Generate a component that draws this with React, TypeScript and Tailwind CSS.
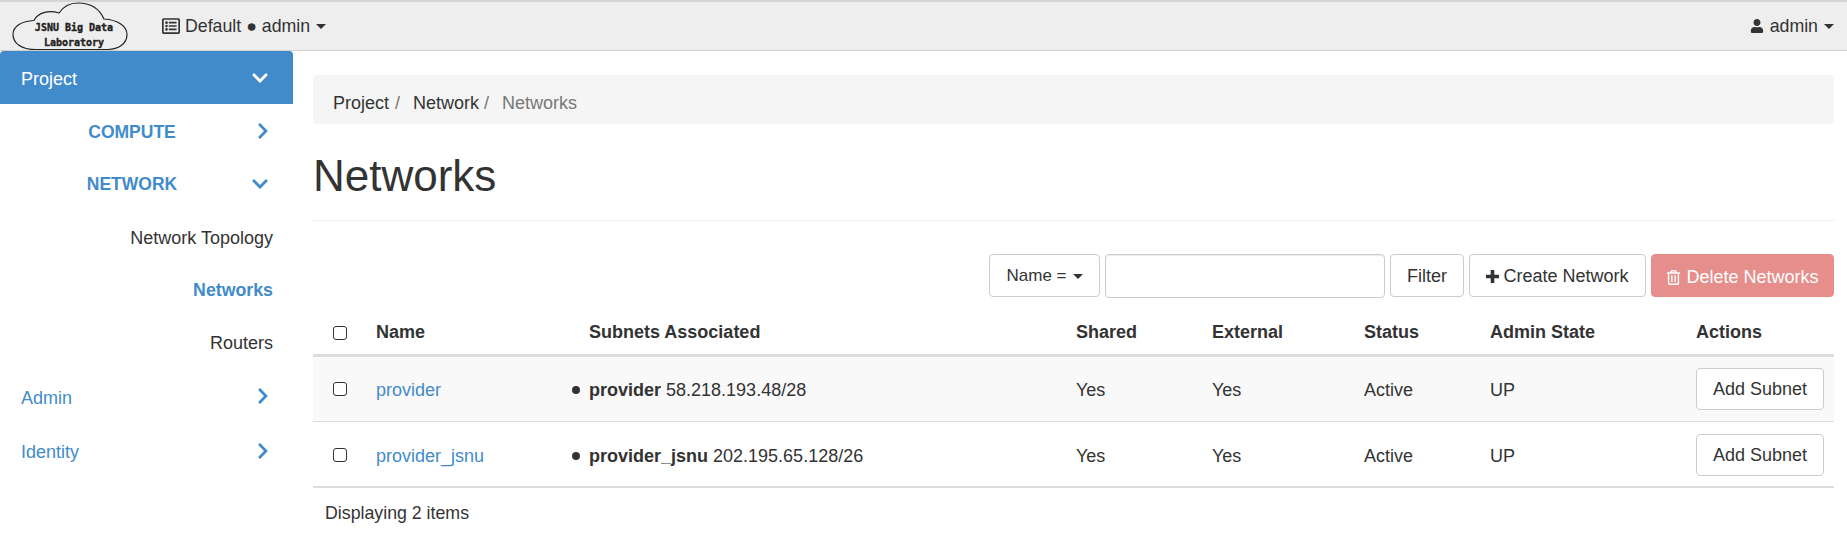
import { FaChevronDown, FaChevronRight, FaRegListAlt, FaRegTrashAlt, FaUser } from 'react-icons/fa';

function Caret() {
  return <span className="ml-[6px] inline-block h-0 w-0 border-x-[5px] border-t-[5px] border-x-transparent border-t-[#333]" />;
}

function PlusIcon() {
  return (
    <svg width="13" height="13" viewBox="0 0 13 13" className="mr-[4px]">
      <path d="M4.7 0h3.6v4.7H13v3.6H8.3V13H4.7V8.3H0V4.7h4.7z" fill="#333" />
    </svg>
  );
}

function Logo() {
  return (
    <svg width="118" height="50" viewBox="0 0 118 50" className="shrink-0">
      <path
        d="M24 48.5C9 48.5 1 42 1 33.5C1 25 10 20 22 19.5C26 11 38 9 47 12C51 6 58 2 66 2C80 2 88 9 92 18C106 19 115 25 115 33.5C115 43 106 48.5 96 48.5Z"
        fill="#eeeeee"
        stroke="#222"
        strokeWidth="1.2"
      />
      <text x="62" y="29.5" textAnchor="middle" fontFamily="'DejaVu Sans Mono', monospace" fontWeight="700" fontSize="10" fill="#222" stroke="#222" strokeWidth="0.35">JSNU Big Data</text>
      <text x="62" y="44.5" textAnchor="middle" fontFamily="'DejaVu Sans Mono', monospace" fontWeight="700" fontSize="10" fill="#222" stroke="#222" strokeWidth="0.35">Laboratory</text>
    </svg>
  );
}

function Navbar() {
  return (
    <header className="flex h-[51px] items-center border-t-2 border-b border-t-[#d4d4d4] border-b-[#d0d0d0] bg-[#eeeeee] pl-3 pr-[13px] text-[17.75px] text-[#333]">
      <Logo />
      <div className="ml-[32px] flex items-center">
        <FaRegListAlt className="mr-[5px] text-[18px]" />
        <span>Default ● admin</span>
        <Caret />
      </div>
      <div className="ml-auto flex items-center">
        <FaUser className="mr-[6px] text-[14px]" />
        <span>admin</span>
        <Caret />
      </div>
    </header>
  );
}

function Sidebar() {
  return (
    <aside className="w-[293px] shrink-0 text-[#428bca]">
      <div className="flex h-[53px] items-center justify-between rounded-t-[4px] bg-[#428bca] pl-[21px] pr-[24px] text-white">
        <span className="pt-[3px]">Project</span>
        <FaChevronDown className="text-[18px]" />
      </div>
      <div className="flex h-[53px] items-center text-[17.5px] font-bold">
        <span className="w-[264px] pt-[3px] text-center">COMPUTE</span>
        <FaChevronRight className="-ml-[10px] text-[18px]" />
      </div>
      <div className="flex h-[53px] items-center text-[17.5px] font-bold">
        <span className="w-[264px] pt-[2px] text-center">NETWORK</span>
        <FaChevronDown className="-ml-[13px] text-[18px]" />
      </div>
      <div className="pr-[20px] text-right">
        <div className="flex h-[53px] items-center justify-end pt-[3px] text-[#333]">Network Topology</div>
        <div className="flex h-[52px] items-center justify-end pt-[2px] text-[17.75px] font-bold">Networks</div>
        <div className="flex h-[53px] items-center justify-end pt-[3px] text-[#333]">Routers</div>
      </div>
      <div className="flex h-[55px] items-center justify-between pl-[21px] pr-[21px]">
        <span className="pt-[5px]">Admin</span>
        <FaChevronRight className="text-[18px]" />
      </div>
      <div className="flex h-[55px] items-center justify-between pl-[21px] pr-[21px]">
        <span className="pt-[3px]">Identity</span>
        <FaChevronRight className="text-[18px]" />
      </div>
    </aside>
  );
}

const rowGrid = 'grid grid-cols-[63px_196px_504px_136px_152px_126px_206px_1fr] items-center';

function Checkbox() {
  return <span className="block h-[14px] w-[14px] rounded-[3px] border border-[#333] bg-white" />;
}

function Row({ name, subnet, cidr, striped }: { name: string; subnet: string; cidr: string; striped?: boolean }) {
  return (
    <div className={`${rowGrid} h-[65px] border-b border-[#dddddd] ${striped ? 'bg-[#f9f9f9]' : 'pt-[2px]'}`}>
      <div className="pl-5"><Checkbox /></div>
      <a className="pt-[2px] text-[#428bca]">{name}</a>
      <div className="flex items-center pt-[2px]">
        <span className="mr-[9px] h-[8px] w-[8px] rounded-full bg-[#333]" />
        <span><b>{subnet}</b> {cidr}</span>
      </div>
      <div className="pt-[2px]">Yes</div>
      <div className="pt-[2px]">Yes</div>
      <div className="pt-[2px]">Active</div>
      <div className="pt-[2px]">UP</div>
      <div>
        <button className="h-[42px] w-[128px] rounded-[4px] border border-[#cccccc] bg-white pt-[1px]">Add Subnet</button>
      </div>
    </div>
  );
}

function Toolbar() {
  const btn = 'flex h-[43px] items-center justify-center rounded-[4px] border border-[#cccccc] bg-white pt-[1px]';
  return (
    <div className="mt-[33px] flex h-[44px] justify-end gap-[5px]">
      <button className={`${btn} w-[111px]`}>
        <span className="text-[17px]">Name =</span>
        <Caret />
      </button>
      <input className="h-[44px] w-[280px] rounded-[4px] border border-[#cccccc] bg-white shadow-[inset_0_1px_1px_rgba(0,0,0,0.075)]" />
      <button className={`${btn} w-[74px]`}>Filter</button>
      <button className={`${btn} w-[177px]`}>
        <PlusIcon />
        Create Network
      </button>
      <button className="flex h-[43px] w-[183px] items-center justify-center rounded-[4px] border border-[#e68b88] bg-[#e68e8c] pt-[3px] text-white">
        <FaRegTrashAlt className="mr-[5px] text-[15px]" />
        Delete Networks
      </button>
    </div>
  );
}

export default function App() {
  return (
    <div className="h-[540px] w-[1847px] overflow-hidden bg-white font-['Liberation_Sans',Arial,sans-serif] text-[18px] text-[#333]">
      <Navbar />
      <div className="flex">
        <Sidebar />
        <main className="ml-5 w-[1521px]">
          <nav className="mt-6 flex h-[49px] items-center rounded-[4px] bg-[#f5f5f5] pt-[7px] pl-5">
            <span>Project</span>
            <span className="mr-[13px] ml-[6px] text-[#777]">/</span>
            <span>Network</span>
            <span className="mr-[13px] ml-[5px] text-[#777]">/</span>
            <span className="text-[#777]">Networks</span>
          </nav>
          <h1 className="mt-[25px] text-[44px] leading-[54px] font-normal">Networks</h1>
          <div className="mt-[17px] border-b border-[#eeeeee]" />
          <Toolbar />
          <div className={`${rowGrid} mt-[15px] h-[44px] border-b-[3px] border-[#dddddd] pb-[2px] font-bold`}>
            <div className="pl-5"><Checkbox /></div>
            <div>Name</div>
            <div className="pl-[17px]">Subnets Associated</div>
            <div>Shared</div>
            <div>External</div>
            <div>Status</div>
            <div>Admin State</div>
            <div>Actions</div>
          </div>
          <Row name="provider" subnet="provider" cidr="58.218.193.48/28" striped />
          <Row name="provider_jsnu" subnet="provider_jsnu" cidr="202.195.65.128/26" />
          <div className="border-t border-[#dddddd] pt-[12px] pl-3 text-[17.75px]">Displaying 2 items</div>
        </main>
      </div>
    </div>
  );
}
